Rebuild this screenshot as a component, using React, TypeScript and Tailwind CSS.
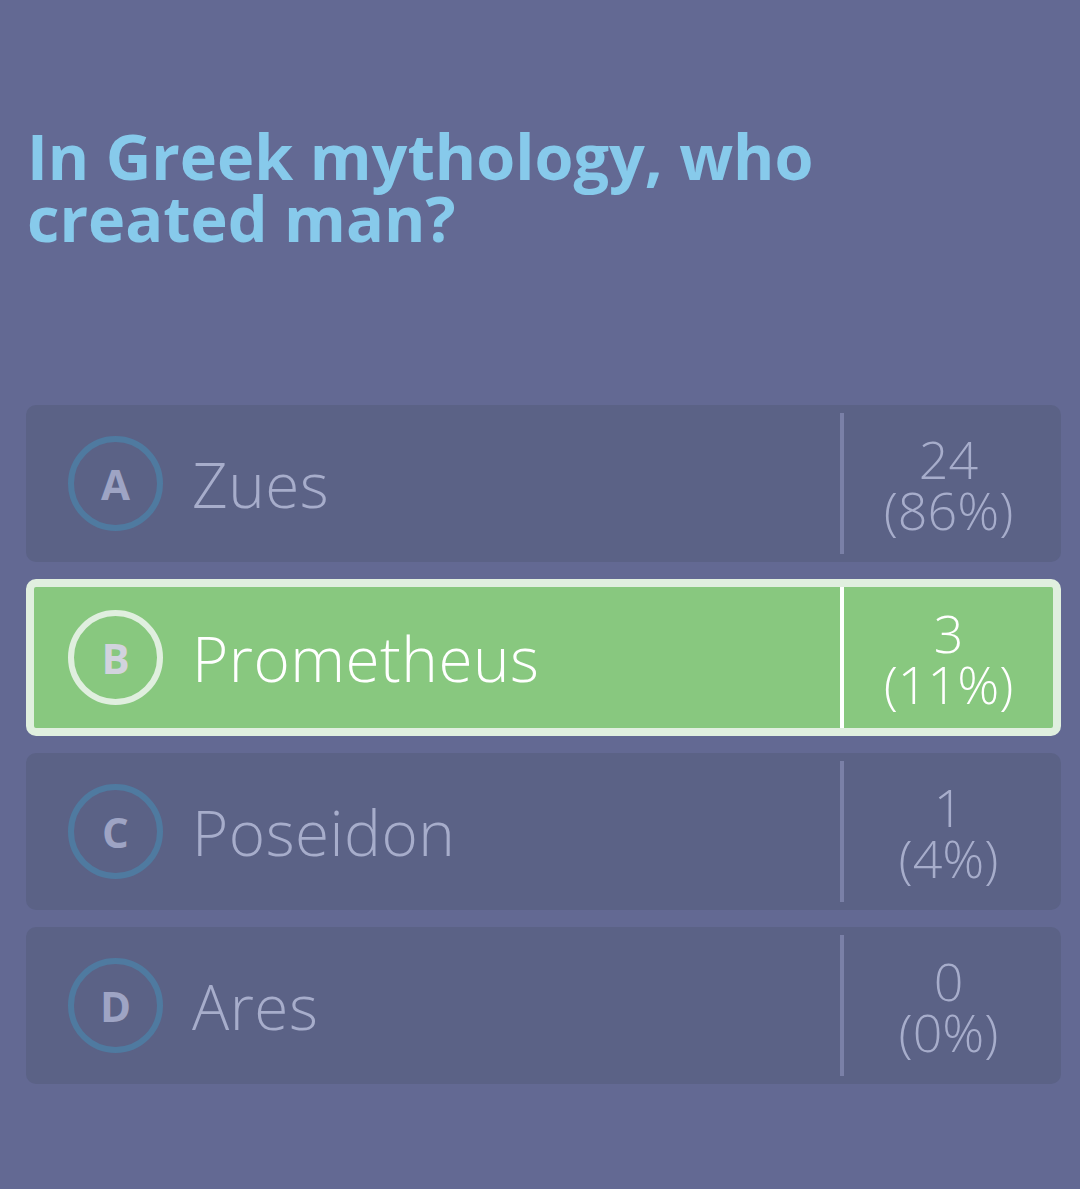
import React from "react";

type Option = { letter: string; label: string; votes: number; pct: number; correct?: boolean };

const options: Option[] = [
  { letter: "A", label: "Zues", votes: 24, pct: 86 },
  { letter: "B", label: "Prometheus", votes: 3, pct: 11, correct: true },
  { letter: "C", label: "Poseidon", votes: 1, pct: 4 },
  { letter: "D", label: "Ares", votes: 0, pct: 0 },
];

function OptionRow({ o }: { o: Option }) {
  const on = !!o.correct;
  return (
    <div
      className={`flex h-[157px] rounded-[10px] border-[8px] ${
        on ? "bg-[#88c87f] border-[#e0efdf]" : "bg-[#5b6286] border-transparent"
      }`}
    >
      <div className="flex flex-1 items-center pl-[34px]">
        <div
          className={`w-[95px] h-[95px] rounded-full border-[6px] flex items-center justify-center ${
            on ? "border-[#e0efdf] text-[#d2d3de]" : "border-[#4f7aa0] text-[#9ea4c4]"
          }`}
        >
          <span className="text-[42px] font-bold leading-none">{o.letter}</span>
        </div>
        <span
          className={`ml-[29px] text-[62px] font-light leading-none tracking-[0.5px] ${
            on ? "text-white" : "text-[#a7adcb]"
          }`}
        >
          {o.label}
        </span>
      </div>
      <div className={`w-[4px] ${on ? "bg-white" : "bg-[#7a80a7]"}`} />
      <div
        className={`w-[209px] flex flex-col items-center justify-center text-[52px] font-light leading-[51px] ${
          on ? "text-white" : "text-[#a7adcb]"
        }`}
      >
        <span>{o.votes}</span>
        <span>({o.pct}%)</span>
      </div>
    </div>
  );
}

export default function App() {
  return (
    <div
      className="min-h-[1189px] bg-[#636993] px-[26px] pt-[125px]"
      style={{ fontFamily: "'Open Sans', 'Noto Sans', sans-serif" }}
    >
      <h1 className="pl-[1px] text-[63px] font-bold leading-[62px] text-[#87caeb] w-[820px]">
        In Greek mythology, who created man?
      </h1>
      <div className="mt-[156px] flex flex-col gap-[17px] w-[1035px]">
        {options.map((o) => (
          <OptionRow key={o.letter} o={o} />
        ))}
      </div>
    </div>
  );
}
